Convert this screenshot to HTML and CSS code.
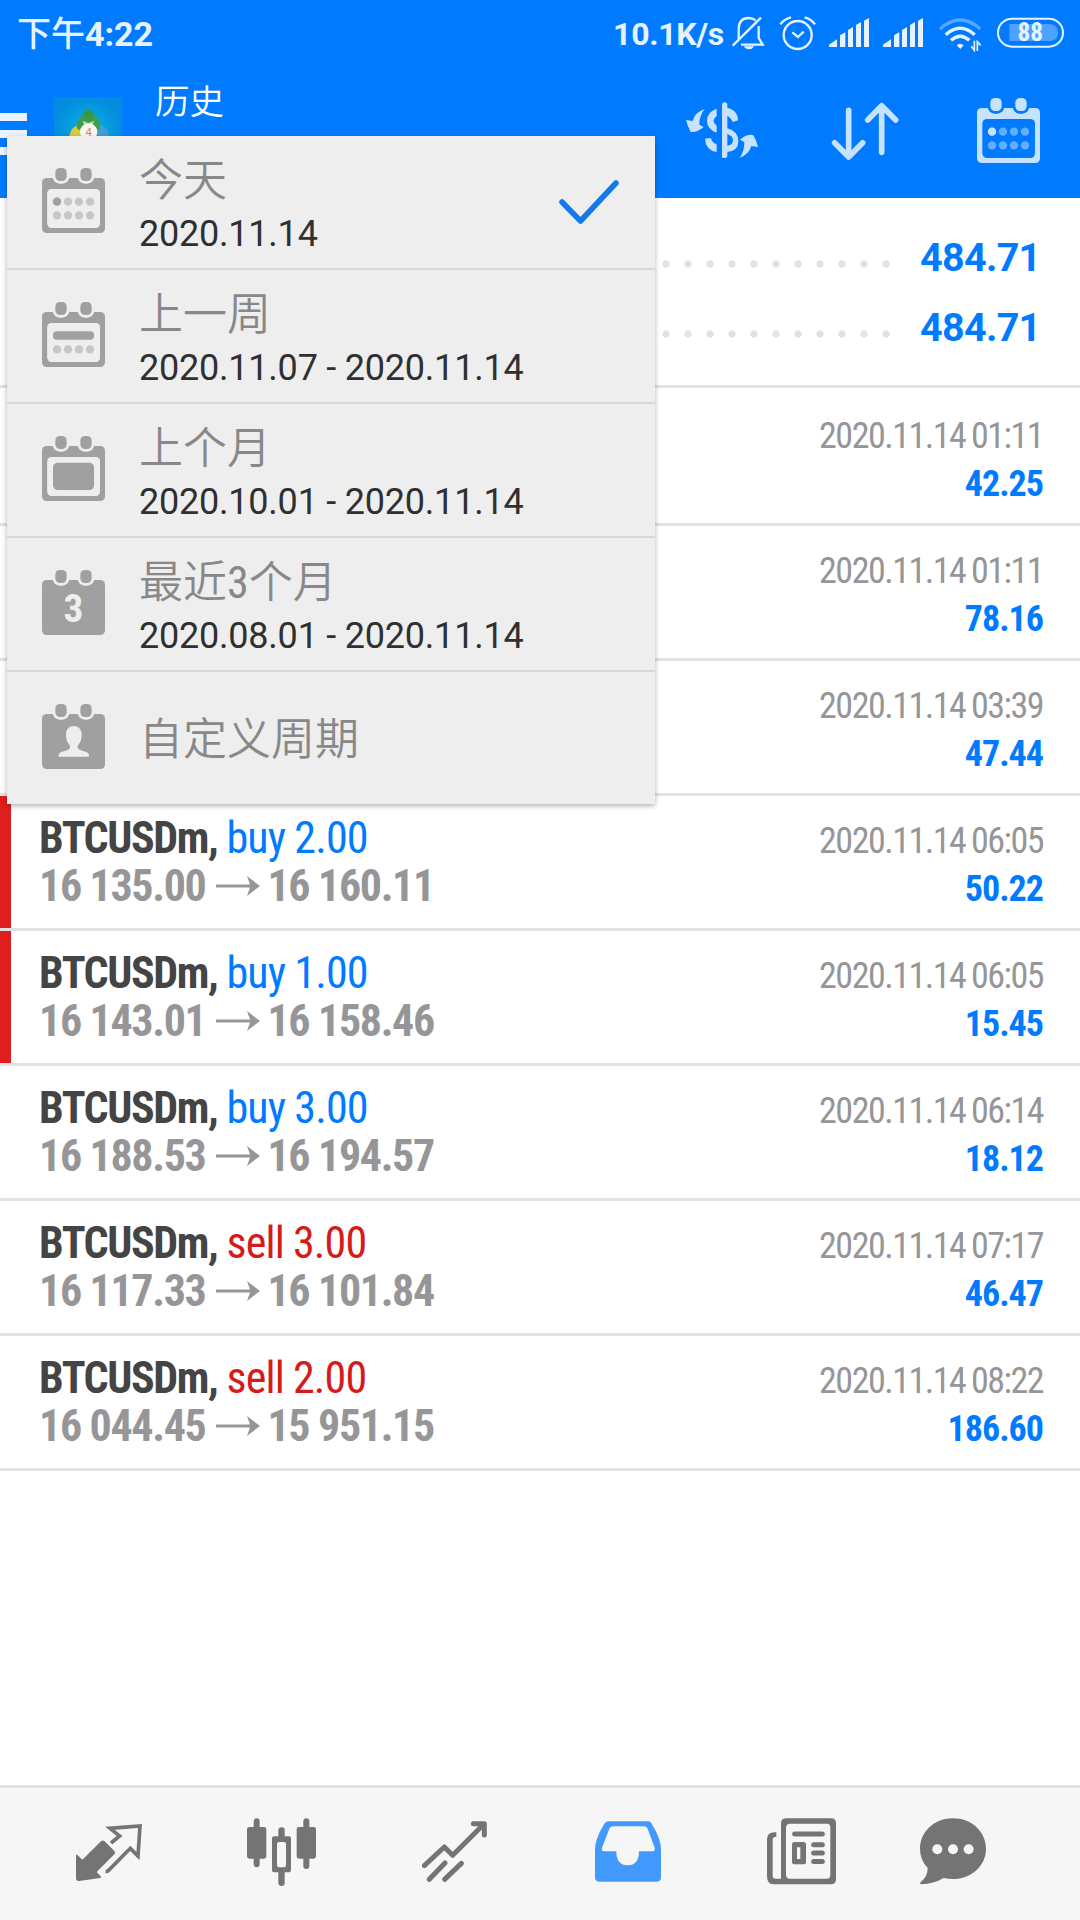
FILE: index.html
```
<!DOCTYPE html>
<html lang="zh-CN">
<head>
  <meta charset="UTF-8">
  <title>历史</title>
  <link rel="stylesheet" href="styles.css">
</head>
<body>

  <!-- shared icon parts -->
  <svg class="defs" width="0" height="0">
    <defs>
      <mask id="cutFrame">
        <rect x="0" y="30" width="189" height="165" rx="14" fill="#fff"/>
        <rect x="16" y="63" width="158" height="117" rx="14" fill="#000"/>
        <rect x="32" y="-8" width="50" height="55" rx="21" fill="#000"/>
        <rect x="107" y="-8" width="50" height="55" rx="21" fill="#000"/>
      </mask>
      <mask id="cutSolid">
        <rect x="0" y="30" width="189" height="165" rx="14" fill="#fff"/>
        <rect x="32" y="-8" width="50" height="55" rx="21" fill="#000"/>
        <rect x="107" y="-8" width="50" height="55" rx="21" fill="#000"/>
      </mask>
      <g id="rings">
        <rect x="40" y="0" width="34" height="39" rx="14"/>
        <rect x="115" y="0" width="34" height="39" rx="14"/>
      </g>
      <g id="calFrame">
        <rect x="0" y="30" width="189" height="165" mask="url(#cutFrame)"/>
        <use href="#rings"/>
      </g>
      <g id="calSolid">
        <rect x="0" y="30" width="189" height="165" mask="url(#cutSolid)"/>
        <use href="#rings"/>
      </g>
      <g id="dots">
        <circle cx="45" r="12.5"/><circle cx="78" r="12.5"/><circle cx="111" r="12.5"/><circle cx="144" r="12.5"/>
      </g>
      <g id="bars">
        <path d="M687 141v-7l24-16v23zM720 141v-35l16-9v44zM744 141v-51l15-9v60zM768 141v-66l15-9v75zM792 141v-79l15-8v87z"/>
      </g>
    </defs>
  </svg>

  <div class="statusbar">
    <div class="clock">下午<b>4:22</b></div>
    <div class="speed">10.1K/s</div>
    <svg class="st bell" viewBox="396 45 99 111">
      <g fill="none" stroke="#e6f3ff" stroke-width="7">
        <path d="M416 118V88q0-34 30-34q13 0 21 7M476 78v36l12 20H423M398 137L483 53"/>
      </g>
      <path d="M431 139h31q-4 9-15 9t-16-9z" fill="#e6f3ff"/>
    </svg>
    <svg class="st alarm" viewBox="537 45 111 111">
      <g fill="none" stroke="#e6f3ff" stroke-width="7">
        <circle cx="593" cy="105" r="42"/>
        <path d="M577 97l17 14 17-16M541 73q10-15 32-21M645 73q-10-15-31-21"/>
      </g>
    </svg>
    <svg class="st signal" viewBox="684 45 126 111"><use href="#bars" fill="#e6f3ff"/></svg>
    <svg class="st signal" viewBox="684 45 126 111"><use href="#bars" fill="#e6f3ff"/></svg>
    <svg class="st wifi" viewBox="1017 45 129 111">
      <g fill="none" stroke="#e6f3ff" stroke-width="10">
        <path d="M1020 87q60-54 121 0" stroke="#55a8ff"/>
        <path d="M1037 104q44-38 87 0M1053 121q28-25 55 0"/>
      </g>
      <path d="M1070 136q10-9 21 0l-10 11z" fill="#e6f3ff"/>
      <path d="M1123 122v29l-9-12M1132 153v-28l10 11" fill="none" stroke="#e6f3ff" stroke-width="5"/>
    </svg>
    <svg class="st battery" viewBox="1191 45 201 111">
      <rect x="1194" y="56" width="195" height="84" rx="42" fill="none" stroke="#e6f3ff" stroke-width="6"/>
      <path d="M1228 72h121q25 2 25 26t-25 25h-121z" fill="#4da3ff"/>
      <text x="1291" y="124" text-anchor="middle">88</text>
    </svg>
  </div>

  <div class="header">
    <div class="burger"><i></i><i></i><i></i></div>
    <svg class="logo" viewBox="162 291 204 204">
      <defs>
        <radialGradient id="sky"><stop offset="0" stop-color="#08b8dc"/><stop offset="1" stop-color="#058bdf"/></radialGradient>
      </defs>
      <rect x="162" y="291" width="204" height="204" rx="6" fill="url(#sky)"/>
      <path d="M290 372q34 2 38 43h-40z" fill="#3f9fd2"/>
      <path d="M208 415q2-40 38-39v39z" fill="#d9cb35"/>
      <path d="M230 385q0-32 22-40h28q20 8 20 40l-14 12-40-2z" fill="#3f9c4c"/>
      <path d="M248 364q10 0 17 6q8-6 18-6l-6 14h-24z" fill="#b8dfa0"/>
      <ellipse cx="265" cy="343" rx="16" ry="14" fill="#37964a"/>
      <circle cx="266" cy="396" r="26" fill="#fbf8f0"/>
      <text x="266" y="408" text-anchor="middle">4</text>
    </svg>
    <div class="title">历史</div>
    <div class="actions">
      <svg class="swap" viewBox="258 288 216 210">
        <path d="M314 327q-29 9-36 36l-20-3q4 16 14 36q20 2 39-15l-13-7q0-28 16-47zM418 474q29-11 36-36l20 3q-6-24-15-36q-20-3-39 14l13 8q0 29-15 47z"/>
        <path d="M350 326v22q-18 13 0 30v20q-29-11-29-35q0-28 29-37zM350 456q-34-6-35-40l17-2q6 17 18 18z"/>
        <path d="M366 474V315q0-8 8-8t8 8v8q32 7 32 38l-15 5q-6-13-17-19v38q33 9 33 39 0 29-33 32v10q0 8-8 8t-8-2zM382 402v35q17-2 17-17 0-12-17-18z" fill-rule="evenodd"/>
      </svg>
      <svg class="sort" viewBox="693 288 207 210">
        <path d="M746 331V470M704 428l42 43 42-43M845 457V318M803 360l42-43 42 43"/>
      </svg>
      <svg class="cal" viewBox="1128 288 195 210">
        <g transform="translate(1131 294)">
          <use href="#calFrame"/>
          <use href="#dots" y="101" opacity=".5"/>
          <use href="#dots" y="142" opacity=".5"/>
          <circle cx="45" cy="101" r="12.5"/>
        </g>
      </svg>
    </div>
  </div>

  <div class="summary">
    <div class="total"><span class="leader"></span><b>484.71</b></div>
    <div class="total"><span class="leader"></span><b>484.71</b></div>
  </div>

  <div class="deals" id="deals"></div>

  <div class="tabs">
    <svg viewBox="108 140 198 210">
      <path d="M108 256q0-6 5-1l14 13 56-55q5-5 11 0l29 29q5 5 0 10l-53 53 12 13q4 4-1 5l-64 9q-9 1-9-9z"/>
      <path d="M213 218l26-21-29-23 90-7-6 90-23-23-64 65q-4 5-10 4" class="line"/>
    </svg>
    <svg viewBox="621 140 207 210">
      <path d="M641 170v-17q0-9 9-9t9 9v17h13q7 0 7 7v81q0 7-7 7h-13v17q0 9-9 9t-9-9v-17h-13q-7 0-7-7v-81q0-7 7-7zM790 170v-17q0-9 9-9t9 9v17h13q7 0 7 7v81q0 7-7 7h-13v22q0 9-9 9t-9-9v-22h-13q-7 0-7-7v-81q0-7 7-7z"/>
      <path d="M715 198v-18q0-9 10-9t9 9v18h13q6 0 6 6v95q0 7-6 7h-13v32q0 9-9 9t-10-9v-32h-13q-6 0-6-7v-95q0-6 6-6zM717 215q-6 0-6 6v63q0 7 6 7h15q6 0 6-7v-63q0-6-6-6z" fill-rule="evenodd"/>
    </svg>
    <svg viewBox="1146 140 195 210">
      <path d="M1153 286l60-56 25 25 94-94M1300 160h33v34M1168 327l47-49M1214 327l50-48" class="line thick"/>
    </svg>
    <svg class="active" viewBox="105 140 198 210">
      <path fill-rule="evenodd" d="M147 153H264q7 0 11 7q28 45 28 77v84q0 13-13 13H118q-13 0-13-13V237q0-32 28-77q5-7 14-7zM160 168q-9 0-13 10l-21 54q-3 11 8 11h35q0 42 34 42t34-42h38q11 0 9-11l-20-54q-4-10-14-10z"/>
    </svg>
    <svg viewBox="618 140 207 210" class="news">
      <path fill-rule="evenodd" d="M679 144H813q15 0 15 15V327q0 15-15 15H644q-23 0-23-23V207q0-21 23-21h5v14h-4q-7 0-7 8V316q0 9 9 9h16V159q0-15 16-15zM690 160q-12 0-12 12V313q0 12 12 12H801q10 0 10-12V172q0-12-10-12z"/>
      <path fill-rule="evenodd" d="M704 215h26q8 0 8 8v51q0 8-8 8h-26q-8 0-8-8v-51q0-8 8-8zM711 231v35h10v-35z"/>
      <path d="M704 191H787M761 223.500H787M761 248H787M761 273.500H787" class="line thick"/>
    </svg>
    <svg viewBox="1080 140 198 210">
      <path d="M1179 144c55 0 99 40 99 91s-44 91-99 91q-15 0-28-3q-31 18-66 19q-8-2-2-8q20-15 20-41q-23-24-23-58c0-51 44-91 99-91z"/>
      <g fill="#f6f6f6"><circle cx="1132" cy="237" r="15"/><circle cx="1179" cy="237" r="15"/><circle cx="1226" cy="237" r="15"/></g>
    </svg>
  </div>

  <div class="menu">
    <div class="item">
      <svg viewBox="0 0 189 195">
        <use href="#calFrame"/>
        <rect x="16" y="63" width="158" height="117" rx="14" class="paper"/>
        <use href="#dots" y="101" opacity=".5"/>
        <use href="#dots" y="142" opacity=".5"/>
        <circle cx="45" cy="101" r="12.5"/>
      </svg>
      <div class="label"><p>今天</p><span>2020.11.14</span></div>
      <svg class="check" viewBox="0 0 62 46"><path d="M4 23L22.500 42 58 4"/></svg>
    </div>
    <div class="item">
      <svg viewBox="0 0 189 195">
        <use href="#calFrame"/>
        <rect x="16" y="63" width="158" height="117" rx="14" class="paper"/>
        <rect x="33" y="88" width="123" height="25" rx="11"/>
        <use href="#dots" y="142" opacity=".5"/>
      </svg>
      <div class="label"><p>上一周</p><span>2020.11.07 - 2020.11.14</span></div>
    </div>
    <div class="item">
      <svg viewBox="0 0 189 195">
        <use href="#calFrame"/>
        <rect x="16" y="63" width="158" height="117" rx="14" class="paper"/>
        <rect x="33" y="80" width="123" height="82" rx="14"/>
      </svg>
      <div class="label"><p>上个月</p><span>2020.10.01 - 2020.11.14</span></div>
    </div>
    <div class="item">
      <svg viewBox="0 0 189 195">
        <use href="#calSolid"/>
        <text x="94" y="157" text-anchor="middle">3</text>
      </svg>
      <div class="label"><p>最近<span class="digit">3</span>个月</p><span>2020.08.01 - 2020.11.14</span></div>
    </div>
    <div class="item">
      <svg viewBox="0 0 189 195">
        <use href="#calSolid"/>
        <path class="paper" d="M95 66c17 0 24 12 24 27q0 20-12 32v8q3 5 26 11q9 3 8 14H50q-1-11 8-14q23-6 26-11v-8q-12-12-12-32c0-15 7-27 23-27z"/>
      </svg>
      <div class="label single"><p>自定义周期</p></div>
    </div>
  </div>

  <script>
    const deals = [
      { time: "2020.11.14 01:11", profit: "42.25" },
      { time: "2020.11.14 01:11", profit: "78.16" },
      { time: "2020.11.14 03:39", profit: "47.44" },
      { side: "buy", lots: "2.00", open: "16 135.00", close: "16 160.11", time: "2020.11.14 06:05", profit: "50.22", mark: true },
      { side: "buy", lots: "1.00", open: "16 143.01", close: "16 158.46", time: "2020.11.14 06:05", profit: "15.45", mark: true },
      { side: "buy", lots: "3.00", open: "16 188.53", close: "16 194.57", time: "2020.11.14 06:14", profit: "18.12" },
      { side: "sell", lots: "3.00", open: "16 117.33", close: "16 101.84", time: "2020.11.14 07:17", profit: "46.47" },
      { side: "sell", lots: "2.00", open: "16 044.45", close: "15 951.15", time: "2020.11.14 08:22", profit: "186.60" }
    ];

    const arrow = `<svg class="arrow" viewBox="0 0 44 20"><path d="M0 8.500h34L31 0l13 10-13 10 3-8.500H0z"/></svg>`;

    document.getElementById("deals").innerHTML = deals.map(d => `
      <div class="deal${d.mark ? " mark" : ""}">
        <div class="left">${d.side ? `
          <div class="symbol"><b>BTCUSDm,</b> <span class="${d.side}">${d.side} ${d.lots}</span></div>
          <div class="prices">${d.open}${arrow}${d.close}</div>` : ""}
        </div>
        <div class="right">
          <div class="time">${d.time}</div>
          <div class="profit">${d.profit}</div>
        </div>
      </div>`).join("");
  </script>

</body>
</html>
```
FILE: styles.css
```
* { box-sizing: border-box; }
body {
  margin: 0;
  width: 1080px;
  height: 1920px;
  overflow: hidden;
  position: relative;
  display: flex;
  flex-direction: column;
  background: #fff;
  font-family: Roboto, "Noto Sans CJK SC", sans-serif;
}

svg { display: block; flex: none; }
.defs { position: absolute; }

.statusbar {
  height: 66px;
  padding: 15px 16px 0 17px;
  display: flex;
  align-items: flex-start;
  background: #007bff;
  color: #e6f3ff;
}

.clock {
  flex: 1;
  font-size: 34px;
  line-height: 38px;
  font-weight: 500;
}

.clock b { font-weight: 700; }

.speed {
  font-size: 32px;
  line-height: 38px;
  font-weight: 700;
  letter-spacing: -0.3px;
  margin-right: 8px;
}

.st { height: 37px; }
.bell { width: 33px; margin-right: 14px; }
.alarm { width: 37px; margin-right: 12px; }
.signal { width: 42px; margin-right: 12px; }
.wifi { width: 43px; margin: 0 15px 0 3px; }
.battery { width: 67px; }
.battery text {
  font-size: 76px;
  font-weight: bold;
  font-stretch: 75%;
  fill: #e6f3ff;
}

.header {
  height: 132px;
  display: flex;
  align-items: flex-start;
  background: #007bff;
}

.burger {
  width: 27px;
  margin-top: 47px;
  display: flex;
  flex-direction: column;
  gap: 9px;
}

.burger i { height: 8px; background: #e9f4ff; }

.logo {
  width: 68px;
  height: 68px;
  margin: 31px 33px 0 27px;
}

.logo text { font-size: 34px; fill: #e08a2c; }

.title {
  flex: 1;
  margin-top: 14px;
  font-size: 34.5px;
  line-height: 44px;
  color: #fff;
  font-weight: 350;
}

.actions {
  display: flex;
  margin: 30px 39px 0 0;
  fill: #c6e2ff;
}

.actions svg { height: 70px; }
.swap { width: 72px; margin-right: 73px; }
.sort { width: 69px; margin-right: 76px; }
.sort path {
  fill: none;
  stroke: #c6e2ff;
  stroke-width: 17;
  stroke-linecap: round;
  stroke-linejoin: round;
}
.cal { width: 65px; }

.summary {
  height: 190px;
  padding: 24px 42px 0 0;
  border-bottom: 3px solid #e2e2e2;
}

.total {
  height: 70px;
  display: flex;
  align-items: center;
}

.total b {
  width: 118px;
  font-size: 39.5px;
  letter-spacing: -0.7px;
  color: #007bff;
}

.leader {
  flex: 1;
  height: 22px;
  margin: 14px 23px 0 17px;
  background: radial-gradient(circle, #e2e2e2 3.3px, transparent 4px) right center / 22px 22px;
}

.deals { padding-top: 3px; flex: 1; }

.deal {
  height: 135px;
  padding: 0 37px 0 39px;
  display: flex;
  justify-content: space-between;
  border-bottom: 3px solid #e2e2e2;
  font-stretch: 75%;
}

.mark { background: linear-gradient(#e01e1e, #e01e1e) no-repeat left / 11px 100%; background-clip: padding-box; }

.left { padding-top: 18px; font-size: 44px; line-height: 48px; }
.symbol { color: #444; letter-spacing: -0.9px; }
.symbol b { letter-spacing: -1.4px; }
.buy { color: #007bff; }
.sell { color: #d61a1a; }

.prices {
  display: flex;
  align-items: center;
  color: #969698;
  font-weight: bold;
  letter-spacing: -1.35px;
}

.arrow {
  width: 44px;
  height: 20px;
  margin: 0 7px 0 11px;
  fill: #969698;
}

.right { padding-top: 21px; text-align: right; font-size: 36px; line-height: 48px; }
.time { color: #969698; letter-spacing: -1.5px; word-spacing: -1px; }
.profit { color: #007bff; font-weight: bold; letter-spacing: -1px; }

.tabs {
  height: 135px;
  padding: 29px 0 0 22px;
  display: grid;
  grid-template-columns: repeat(5, 173px) 131px;
  justify-items: center;
  align-items: start;
  border-top: 3px solid #e2e2e2;
  background: #f6f6f6;
  fill: #747474;
}

.tabs svg { height: 70px; }
.tabs .active { fill: #429aff; }
.news { overflow: visible; }

.line {
  fill: none;
  stroke: #747474;
  stroke-width: 11;
}

.thick {
  stroke-width: 15;
  stroke-linecap: round;
  stroke-linejoin: round;
}

/* period dropdown */
.menu {
  position: absolute;
  left: 7px;
  top: 136px;
  width: 648px;
  background: #eee;
  box-shadow: 0 2px 5px rgba(0, 0, 0, .3);
}

.item {
  height: 134px;
  padding: 0 34px 0 35px;
  display: flex;
  border-bottom: 2px solid #d8d8d8;
}

.item:last-child { height: 132px; border: 0; }

.item > svg {
  width: 63px;
  height: 65px;
  margin-top: 32px;
  fill: #a0a0a0;
}

.item .paper { fill: #eee; }
.item text { font-size: 118px; font-weight: bold; font-stretch: 75%; fill: #eee; }

.item > .check { width: 62px; height: 46px; margin: 43px 1px 0 0; }
.check path {
  fill: none;
  stroke: #1279e8;
  stroke-width: 5.5;
  stroke-linecap: round;
  stroke-linejoin: round;
}

.label {
  flex: 1;
  padding: 18px 0 0 34px;
}

.label p {
  margin: 0;
  font-size: 44px;
  line-height: 54px;
  font-weight: 350;
  color: #888;
}

.label > span {
  display: block;
  font-size: 36px;
  line-height: 52px;
  letter-spacing: -0.22px;
  color: #303030;
}

.digit { font-stretch: 75%; font-weight: 400; }

.single { padding-top: 41px; }
```
